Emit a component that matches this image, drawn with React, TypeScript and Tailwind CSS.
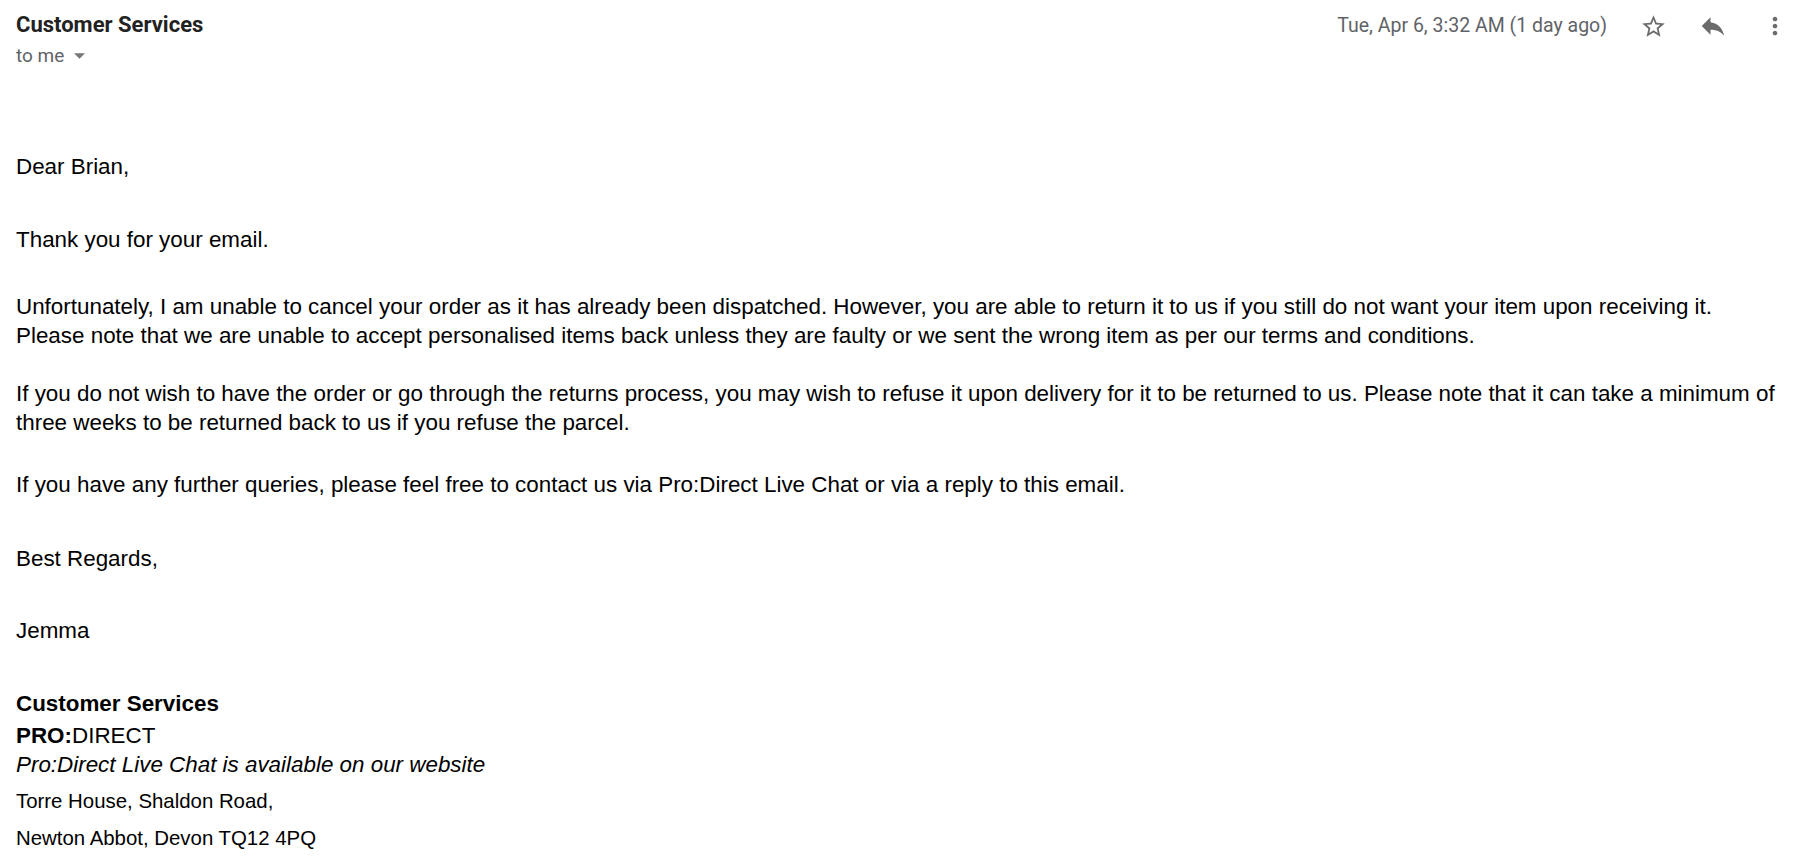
import React from 'react'

function StarIcon() {
  return (
    <svg viewBox="0 0 24 24" className="w-[27px] h-[27px]" fill="#6b6b6b">
      <path d="M22 9.24l-7.19-.62L12 2 9.19 8.63 2 9.24l5.46 4.73L5.82 21 12 17.27 18.18 21l-1.63-7.03L22 9.24zM12 15.4l-3.76 2.27 1-4.28-3.32-2.88 4.38-.38L12 6.1l1.71 4.04 4.38.38-3.32 2.88 1 4.28L12 15.4z" />
    </svg>
  )
}

function ReplyIcon() {
  return (
    <svg viewBox="0 0 24 24" className="w-[30px] h-[30px]" fill="#6b6b6b">
      <path d="M10 9V5l-7 7 7 7v-4.1c5 0 8.5 1.6 11 5.1-1-5-4-10-11-11z" />
    </svg>
  )
}

function MoreIcon() {
  return (
    <svg viewBox="0 0 24 24" className="w-[28px] h-[28px]" fill="#6b6b6b">
      <path d="M12 8c1.1 0 2-.9 2-2s-.9-2-2-2-2 .9-2 2 .9 2 2 2zm0 2c-1.1 0-2 .9-2 2s.9 2 2 2 2-.9 2-2-.9-2-2-2zm0 6c-1.1 0-2 .9-2 2s.9 2 2 2 2-.9 2-2-.9-2-2-2z" />
    </svg>
  )
}

export default function App() {
  return (
    <div className="w-[1800px] h-[856px] bg-white overflow-hidden">
      {/* header */}
      <div className="flex items-start justify-between pl-4 pr-[9px] pt-[11px]">
        <div className="font-['Roboto',sans-serif]">
          <div className="text-[22px] leading-[28px] font-bold text-[#222]">Customer Services</div>
          <div className="flex items-center mt-[5px] text-[19px] leading-[24px] text-[#5f6368]">
            <span>to me</span>
            <svg viewBox="0 0 10 5" className="w-[11px] h-[6px] ml-[10px]" fill="#777">
              <path d="M0 0l5 5 5-5z" />
            </svg>
          </div>
        </div>
        <div className="flex items-center">
          <span className="font-['Roboto',sans-serif] text-[19.5px] text-[#5f6368] mr-[30px]">Tue, Apr 6, 3:32 AM (1 day ago)</span>
          <div className="w-[32px] flex justify-center mr-[28px]"><StarIcon /></div>
          <div className="w-[32px] flex justify-center mr-[30px]"><ReplyIcon /></div>
          <div className="w-[32px] flex justify-center"><MoreIcon /></div>
        </div>
      </div>

      {/* body */}
      <div className="pl-4 pt-[84px] font-['Liberation_Sans',Arial,sans-serif] text-[22.4px] text-black leading-[29px]">
        <div>Dear Brian,</div>
        <div className="mt-[44px]">Thank you for your email.</div>
        <div className="mt-[38px]">
          Unfortunately, I am unable to cancel your order as it has already been dispatched. However, you are able to return it to us if you still do not want your item upon receiving it.
          <br />
          Please note that we are unable to accept personalised items back unless they are faulty or we sent the wrong item as per our terms and conditions.
        </div>
        <div className="mt-[29px]">
          If you do not wish to have the order or go through the returns process, you may wish to refuse it upon delivery for it to be returned to us. Please note that it can take a minimum of
          <br />
          three weeks to be returned back to us if you refuse the parcel.
        </div>
        <div className="mt-[33px]">If you have any further queries, please feel free to contact us via Pro:Direct Live Chat or via a reply to this email.</div>
        <div className="mt-[45px]">Best Regards,</div>
        <div className="mt-[43px]">Jemma</div>
        <div className="mt-[44px] font-bold">Customer Services</div>
        <div className="mt-[4px] leading-[28px]"><span className="font-bold">PRO:</span>DIRECT</div>
        <div className="leading-[29px] italic">Pro:Direct Live Chat is available on our website</div>
        <div className="mt-[4px] text-[20.4px] leading-[37px]">Torre House, Shaldon Road,</div>
        <div className="text-[20.4px] leading-[36px]">Newton Abbot, Devon TQ12 4PQ</div>
      </div>
    </div>
  )
}
